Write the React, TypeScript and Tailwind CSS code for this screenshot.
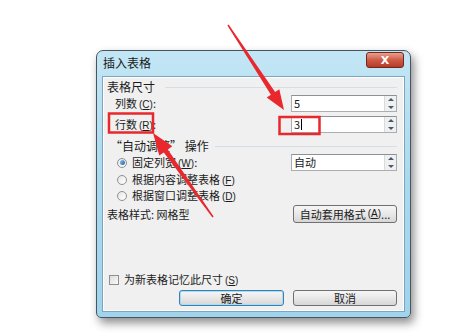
import React from 'react';

type Pt = [number, number];

// tapered red annotation arrow, drawn as a single polygon from tail to tip
function arrowPoints(tail: Pt, tip: Pt, headLen: number, headW: number, tailW: number, neckW: number): string {
  const dx = tip[0] - tail[0];
  const dy = tip[1] - tail[1];
  const len = Math.hypot(dx, dy);
  const ux = dx / len;
  const uy = dy / len;
  const nx = -uy;
  const ny = ux;
  const bx = tip[0] - ux * headLen;
  const by = tip[1] - uy * headLen;
  const p = (x: number, y: number, w: number, s: number) => `${(x + nx * w * s).toFixed(1)},${(y + ny * w * s).toFixed(1)}`;
  return [
    p(tail[0], tail[1], tailW / 2, 1),
    p(bx, by, neckW / 2, 1),
    p(bx, by, headW / 2, 1),
    `${tip[0]},${tip[1]}`,
    p(bx, by, headW / 2, -1),
    p(bx, by, neckW / 2, -1),
    p(tail[0], tail[1], tailW / 2, -1),
  ].join(' ');
}

const Key: React.FC<{ k: string }> = ({ k }) => (
  <span className="font-['Liberation_Sans',sans-serif] text-[10px] ml-[2px]">
    (<span className="underline">{k}</span>)
  </span>
);

const Spin: React.FC = () => (
  <div className="w-[12px] h-full flex flex-col border-l border-[#dadada] bg-[#eef0f2]">
    <div className="flex-1 flex items-center justify-center">
      <div className="w-0 h-0 border-l-[3px] border-r-[3px] border-b-[3px] border-l-transparent border-r-transparent border-b-[#4d5866]" />
    </div>
    <div className="flex-1 flex items-center justify-center">
      <div className="w-0 h-0 border-l-[3px] border-r-[3px] border-t-[3px] border-l-transparent border-r-transparent border-t-[#4d5866]" />
    </div>
  </div>
);

const SpinBox: React.FC<{ value: string; caret?: boolean }> = ({ value, caret }) => (
  <div className="w-[106px] h-[17px] flex border border-[#abadb3] border-t-[#8d9096] bg-white">
    <div className="flex-1 flex items-center pl-[2px] text-[11px] leading-none">
      {value}
      {caret && <span className="w-px h-[11px] bg-black ml-px" />}
    </div>
    <Spin />
  </div>
);

const Radio: React.FC<{ on?: boolean }> = ({ on }) => (
  <div className="w-[10px] h-[10px] rounded-full border border-[#8e8f8f] bg-gradient-to-br from-[#e6e6e6] to-[#ffffff] flex items-center justify-center">
    {on && <div className="w-[5px] h-[5px] rounded-full bg-gradient-to-br from-[#8fc6f0] to-[#1c5fa8]" />}
  </div>
);

const Btn: React.FC<{ children: React.ReactNode; primary?: boolean; w: string }> = ({ children, primary, w }) => (
  <div
    className={`${w} h-full rounded-[3px] border ${primary ? 'border-[#3c7fb1] shadow-[inset_0_0_0_1px_#a7dcf5]' : 'border-[#707070]'} bg-gradient-to-b from-[#f6f6f6] via-[#e8e8e8] to-[#d6d6d6] flex items-center justify-center text-[11px] leading-none`}
  >
    {children}
  </div>
);

export default function App() {
  const arrow1 = arrowPoints([228, 25], [284, 110], 20, 15, 1.5, 5);
  const arrow2 = arrowPoints([213, 217], [153, 133], 22, 16, 1.5, 5);

  return (
    <div className="w-[457px] h-[335px] bg-white relative overflow-hidden font-['Noto_Sans_CJK_SC','Liberation_Sans',sans-serif] text-[#1b1b1b]">
      <div className="pl-[96px] pt-[50px]">
        <div className="w-[315px] h-[268px] rounded-t-[7px] rounded-b-[5px] border border-[#48555f] bg-gradient-to-b from-[#c3e6f5] via-[#a9d9ee] to-[#9fd4ec] shadow-[3px_5px_10px_rgba(0,0,0,0.45)] flex flex-col px-[5px] pb-[5px]">
          {/* title bar */}
          <div className="h-[25px] flex items-start justify-between">
            <span className="ml-[1px] mt-[5px] text-[12px] leading-[14px] text-[#1a1a1a]">插入表格</span>
            <div className="mr-[1px] mt-[1px] w-[38px] h-[16px] rounded-[3px] border border-[#6e2a22] bg-gradient-to-b from-[#e7a08f] via-[#cf5b45] to-[#b83a24] flex items-center justify-center">
              <span className="font-['DejaVu_Sans',sans-serif] text-white text-[11px] font-bold leading-none">X</span>
            </div>
          </div>

          {/* client area */}
          <div className="flex-1 bg-[#f0f0f0] border border-[#7fa4bd] shadow-[inset_0_0_0_1px_#ffffff] flex flex-col pl-[4px] pr-[7px] pt-[2px] pb-[5px] text-[11px]">
            <div className="h-[16px] flex items-center">
              <span className="text-[12px] leading-none">表格尺寸</span>
              <div className="flex-1 ml-[10px] h-[2px] border-t border-[#d5dfe5] border-b-white mt-[2px]" />
            </div>

            <div className="h-[17px] flex items-center justify-between">
              <span className="ml-[8px] leading-none">列数<Key k="C" />:</span>
              <SpinBox value="5" />
            </div>

            <div className="h-[17px] mt-[4px] flex items-center justify-between">
              <span className="ml-[8px] leading-none">行数<Key k="R" />:</span>
              <SpinBox value="3" caret />
            </div>

            <div className="h-[16px] mt-[5px] flex items-center">
              <span className="ml-[3px] text-[12px] leading-none">“自动调整” 操作</span>
              <div className="flex-1 ml-[6px] h-[2px] border-t border-[#d5dfe5] border-b-white mt-[2px]" />
            </div>

            <div className="h-[17px] flex items-center justify-between">
              <div className="flex items-center ml-[10px] gap-[5px]">
                <Radio on />
                <span className="leading-none">固定列宽<Key k="W" />:</span>
              </div>
              <SpinBox value="自动" />
            </div>

            <div className="h-[15px] mt-px flex items-center ml-[10px] gap-[5px]">
              <Radio />
              <span className="leading-none">根据内容调整表格<Key k="F" /></span>
            </div>

            <div className="h-[15px] mt-px flex items-center ml-[10px] gap-[5px]">
              <Radio />
              <span className="leading-none">根据窗口调整表格<Key k="D" /></span>
            </div>

            <div className="h-[18px] mt-[2px] flex items-center justify-between">
              <span className="leading-none">表格样式: 网格型</span>
              <div className="h-[18px] flex">
                <Btn w="w-[104px]">自动套用格式<Key k="A" />...</Btn>
              </div>
            </div>

            <div className="flex-1" />

            <div className="h-[15px] flex items-center ml-[2px] gap-[5px]">
              <div className="w-[10px] h-[10px] border border-[#8e8f8f] bg-gradient-to-br from-[#dcdcdc] to-[#fafafa]" />
              <span className="leading-none">为新表格记忆此尺寸<Key k="S" /></span>
            </div>

            <div className="h-[16px] mt-[3px] flex justify-end gap-[9px]">
              <Btn w="w-[105px]" primary>确定</Btn>
              <Btn w="w-[104px]">取消</Btn>
            </div>
          </div>
        </div>
      </div>

      {/* red annotation marks on top of the screenshot */}
      <svg className="absolute inset-0 pointer-events-none" width="457" height="335" viewBox="0 0 457 335">
        <polygon points={arrow1} fill="#e8282c" />
        <polygon points={arrow2} fill="#e8282c" />
        <rect x="109" y="113.5" width="44" height="19" fill="none" stroke="#e8282c" strokeWidth="2.5" />
        <rect x="279.5" y="117" width="40" height="17" fill="none" stroke="#e8282c" strokeWidth="2.5" />
      </svg>
    </div>
  );
}
